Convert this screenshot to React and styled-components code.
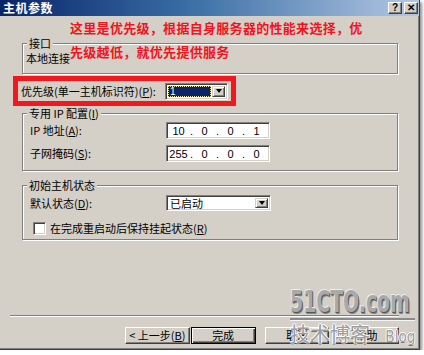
import React from "react";
import styled, { createGlobalStyle } from "styled-components";

const GlobalStyle = createGlobalStyle`
  html, body {
    margin: 0;
    padding: 0;
    background: #ffffff;
  }
  body {
    font-family: "Noto Sans CJK SC", "Liberation Sans", sans-serif;
    font-size: 11px;
    color: #000;
  }
`;

const Window = styled.div`
  position: relative;
  width: 420px;
  height: 350px;
  box-sizing: border-box;
  background: #d4d0c8;
  border-right: 1px solid #404040;
  border-bottom: 1px solid #404040;
  box-shadow: inset -1px -1px 0 #808080, 2px 2px 3px rgba(0, 0, 0, 0.45);
  display: flex;
  flex-direction: column;
`;

const TitleBar = styled.div`
  height: 16px;
  display: flex;
  align-items: center;
  background: linear-gradient(to right, #0a246a 0%, #3a6ea5 45%, #b4c8e4 100%);
  padding: 0 1px 0 3px;
`;

const TitleText = styled.span`
  color: #fff;
  font-weight: bold;
  font-size: 12px;
  line-height: 16px;
  letter-spacing: 0.5px;
`;

const CaptionButtons = styled.div`
  margin-left: auto;
  display: flex;
  gap: 2px;
`;

const CaptionButton = styled.div`
  width: 14px;
  height: 12px;
  box-sizing: border-box;
  background: #d4d0c8;
  border-top: 1px solid #fff;
  border-left: 1px solid #fff;
  border-right: 1px solid #404040;
  border-bottom: 1px solid #404040;
  box-shadow: inset -1px -1px 0 #808080;
  display: flex;
  align-items: center;
  justify-content: center;
  font-family: "Liberation Sans", sans-serif;
  font-weight: bold;
  font-size: 10px;
  line-height: 10px;
`;

const Body = styled.div`
  flex: 1;
  display: flex;
  flex-direction: column;
  padding: 0 20px 5px 10px;
`;

const Group = styled.div`
  position: relative;
  margin: ${(p) => p.$top}px 1px 0 12px;
  border: 1px solid #808080;
  box-shadow: inset 1px 1px 0 #fff, 1px 1px 0 #fff;
  padding: ${(p) => p.$pad};
`;

const Legend = styled.span`
  position: absolute;
  top: -7px;
  left: 4px;
  padding: 0 2px;
  background: #d4d0c8;
  line-height: 13px;
  white-space: nowrap;
`;

const PlainText = styled.div`
  line-height: 13px;
`;

const Highlight = styled.div`
  margin: 2px 0 0 3px;
  width: 223px;
  height: 30px;
  box-sizing: border-box;
  border: 5px solid #f01a1e;
  display: flex;
  align-items: center;
  padding: 0 0 0 3px;
`;

const RowLabel = styled.span`
  width: ${(p) => p.$w}px;
  flex: none;
  line-height: 13px;
  white-space: nowrap;
`;

const Fields = styled.div`
  display: grid;
  grid-template-columns: 136px 104px;
  row-gap: ${(p) => p.$gap}px;
  align-items: center;
`;

const Sunken = styled.div`
  box-sizing: border-box;
  width: ${(p) => p.$w}px;
  height: ${(p) => p.$h}px;
  flex: none;
  background: #fff;
  border-top: 1px solid #808080;
  border-left: 1px solid #808080;
  border-right: 1px solid #fff;
  border-bottom: 1px solid #fff;
  box-shadow: inset 1px 1px 0 #404040, inset -1px -1px 0 #d4d0c8;
  display: flex;
  align-items: center;
  padding: 2px;
`;

const IpField = styled.span`
  width: 19px;
  text-align: center;
  font-family: "Liberation Sans", sans-serif;
  font-size: 11px;
  line-height: 12px;
`;

const IpDot = styled.span`
  width: 7px;
  text-align: center;
  font-family: "Liberation Sans", sans-serif;
  font-size: 11px;
  line-height: 12px;
`;

const SelectedValue = styled.div`
  flex: 1;
  height: 11px;
  margin-right: 1px;
  background: #0a246a;
  outline: 1px dotted #e8e0a0;
  outline-offset: -1px;
  color: #fff;
  font-family: "Liberation Sans", sans-serif;
  font-size: 10px;
  line-height: 11px;
  padding-left: 2px;
`;

const SelectText = styled.span`
  flex: 1;
  padding-left: 1px;
  line-height: 12px;
`;

const DropButton = styled.div`
  width: 13px;
  height: 100%;
  flex: none;
  box-sizing: border-box;
  background: #d4d0c8;
  border-top: 1px solid #d4d0c8;
  border-left: 1px solid #d4d0c8;
  border-right: 1px solid #404040;
  border-bottom: 1px solid #404040;
  box-shadow: inset 1px 1px 0 #fff, inset -1px -1px 0 #808080;
  display: flex;
  align-items: center;
  justify-content: center;
`;

const Arrow = styled.span`
  width: 0;
  height: 0;
  border-left: 3.5px solid transparent;
  border-right: 3.5px solid transparent;
  border-top: 4px solid #000;
`;

const CheckRow = styled.div`
  display: flex;
  align-items: center;
  gap: 4px;
  margin: 11px 0 0 3px;
  line-height: 13px;
`;

const Separator = styled.div`
  margin-top: auto;
  height: 0;
  border-top: 1px solid #808080;
  border-bottom: 1px solid #fff;
`;

const ButtonRow = styled.div`
  display: flex;
  margin: 10px 0 0 115px;
`;

const Button = styled.div`
  width: 65px;
  height: 17px;
  box-sizing: border-box;
  margin-left: ${(p) => p.$gap || 0}px;
  background: #d4d0c8;
  border: 1px solid ${(p) => (p.$default ? "#000" : "#fff")};
  ${(p) =>
    p.$default
      ? "box-shadow: inset 1px 1px 0 #fff, inset -1px -1px 0 #404040, inset -2px -2px 0 #808080;"
      : "border-right-color: #404040; border-bottom-color: #404040; box-shadow: inset -1px -1px 0 #808080;"}
  display: flex;
  align-items: center;
  justify-content: center;
  line-height: 13px;
  white-space: nowrap;
`;

const Note = styled.div`
  position: absolute;
  left: 70px;
  top: 16px;
  color: #f0141e;
  font-weight: bold;
  font-size: 13px;
  line-height: 24px;
  letter-spacing: 0.3px;
  white-space: nowrap;
`;

const Watermark = styled.div`
  position: absolute;
  left: 290px;
  top: 286px;
  width: 125px;
  display: flex;
  flex-direction: column;
  pointer-events: none;
`;

const WatermarkLogo = styled.div`
  font-family: "DejaVu Sans", sans-serif;
  font-weight: bold;
  font-size: 30px;
  line-height: 32px;
  height: 32px;
  color: #a9a9a9;
  transform: scaleX(0.63);
  transform-origin: left center;
  white-space: nowrap;
  text-shadow: -1px -1px 0 #eee, 1px 1px 0 #555, 2px 2px 0 #888;
`;

const WatermarkRule = styled.div`
  height: 0;
  border-top: 2px solid #8a8a8a;
  border-bottom: 1px solid #f4f4f4;
`;

const WatermarkFoot = styled.div`
  display: flex;
  align-items: baseline;
  justify-content: space-between;
  color: #9d9d9d;
  text-shadow: -1px 0 0 #fff, 1px 0 0 #fff, 0 -1px 0 #fff, 0 1px 0 #777;
`;

const WatermarkCn = styled.span`
  font-size: 20px;
  line-height: 26px;
`;

const WatermarkEn = styled.span`
  font-family: "DejaVu Sans", sans-serif;
  font-size: 16px;
  transform: scaleX(0.85);
  transform-origin: right center;
`;

const App = () => {
  return (
    <>
      <GlobalStyle />
      <Window>
        <TitleBar>
          <TitleText>主机参数</TitleText>
          <CaptionButtons>
            <CaptionButton>?</CaptionButton>
            <CaptionButton>✕</CaptionButton>
          </CaptionButtons>
        </TitleBar>

        <Body>
          <Group $top={27} $pad="8px 7px 8px 3px">
            <Legend>接口</Legend>
            <PlainText>本地连接</PlainText>
          </Group>

          <Highlight>
            <RowLabel $w={144}>
              优先级(单一主机标识符)(<u>P</u>):
            </RowLabel>
            <Sunken $w={63} $h={17}>
              <SelectedValue>1</SelectedValue>
              <DropButton>
                <Arrow />
              </DropButton>
            </Sunken>
          </Highlight>

          <Group $top={7} $pad="8px 7px 8px 7px">
            <Legend>
              专用 IP 配置(<u>I</u>)
            </Legend>
            <Fields $gap={6}>
              <RowLabel>
                IP 地址(<u>A</u>):
              </RowLabel>
              <Sunken $w={104} $h={17}>
                <IpField>10</IpField>
                <IpDot>.</IpDot>
                <IpField>0</IpField>
                <IpDot>.</IpDot>
                <IpField>0</IpField>
                <IpDot>.</IpDot>
                <IpField>1</IpField>
              </Sunken>
              <RowLabel>
                子网掩码(<u>S</u>):
              </RowLabel>
              <Sunken $w={104} $h={17}>
                <IpField>255</IpField>
                <IpDot>.</IpDot>
                <IpField>0</IpField>
                <IpDot>.</IpDot>
                <IpField>0</IpField>
                <IpDot>.</IpDot>
                <IpField>0</IpField>
              </Sunken>
            </Fields>
          </Group>

          <Group $top={14} $pad="9px 7px 4px 7px">
            <Legend>初始主机状态</Legend>
            <Fields $gap={0}>
              <RowLabel>
                默认状态(<u>D</u>):
              </RowLabel>
              <Sunken $w={105} $h={16}>
                <SelectText>已启动</SelectText>
                <DropButton>
                  <Arrow />
                </DropButton>
              </Sunken>
            </Fields>
            <CheckRow>
              <Sunken $w={13} $h={13} />
              <span>
                在完成重启动后保持挂起状态(<u>R</u>)
              </span>
            </CheckRow>
          </Group>

          <Separator />

          <ButtonRow>
            <Button>
              &lt; 上一步(<u>B</u>)
            </Button>
            <Button $default $gap={1}>
              完成
            </Button>
            <Button $gap={9}>取消</Button>
            <Button $gap={5}>帮助</Button>
          </ButtonRow>
        </Body>

        <Note>
          这里是优先级，根据自身服务器的性能来选择，优
          <br />
          先级越低，就优先提供服务
        </Note>

        <Watermark>
          <WatermarkLogo>51CTO.com</WatermarkLogo>
          <WatermarkRule />
          <WatermarkFoot>
            <WatermarkCn>技术博客</WatermarkCn>
            <WatermarkEn>Blog</WatermarkEn>
          </WatermarkFoot>
        </Watermark>
      </Window>
    </>
  );
};

export default App;
